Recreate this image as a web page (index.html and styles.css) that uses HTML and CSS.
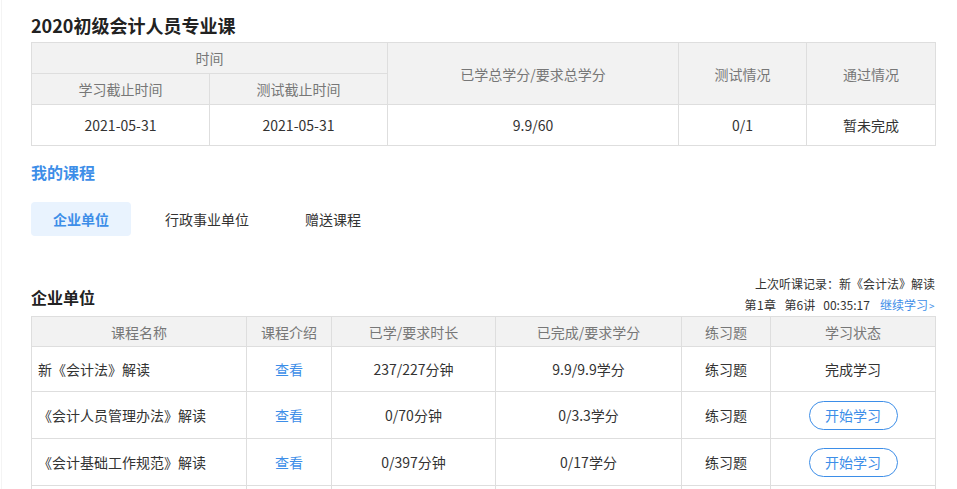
FILE: index.html
```html
<!DOCTYPE html>
<html lang="zh-CN">
<head>
<meta charset="utf-8">
<title>2020初级会计人员专业课</title>
<link rel="stylesheet" href="styles.css">
</head>
<body>
<div class="page">
  <h1 class="title">2020初级会计人员专业课</h1>
  <table class="grid summary">
    <colgroup>
      <col style="width:178px"><col style="width:178px"><col style="width:291px"><col style="width:128px"><col style="width:129px">
    </colgroup>
    <thead>
      <tr class="hrow">
        <th colspan="2">时间</th>
        <th rowspan="2">已学总学分/要求总学分</th>
        <th rowspan="2">测试情况</th>
        <th rowspan="2">通过情况</th>
      </tr>
      <tr class="hrow">
        <th>学习截止时间</th>
        <th>测试截止时间</th>
      </tr>
    </thead>
    <tbody>
      <tr class="drow">
        <td>2021-05-31</td>
        <td>2021-05-31</td>
        <td>9.9/60</td>
        <td>0/1</td>
        <td>暂未完成</td>
      </tr>
    </tbody>
  </table>

  <h2 class="section">我的课程</h2>
  <div class="tabs">
    <span class="tab active">企业单位</span>
    <span class="tab">行政事业单位</span>
    <span class="tab">赠送课程</span>
  </div>

  <div class="listhead">
    <h3 class="subtitle">企业单位</h3>
    <div class="record">
      <div>上次听课记录：新《会计法》解读</div>
      <div class="last"><span>第1章</span><span>第6讲</span><span>00:35:17</span><a class="link">继续学习<span class="gt">&gt;</span></a></div>
    </div>
  </div>

  <table class="grid courses">
    <colgroup>
      <col style="width:215px"><col style="width:85px"><col style="width:164px"><col style="width:186px"><col style="width:89px"><col style="width:165px">
    </colgroup>
    <thead>
      <tr class="hrow">
        <th>课程名称</th>
        <th>课程介绍</th>
        <th>已学/要求时长</th>
        <th>已完成/要求学分</th>
        <th>练习题</th>
        <th>学习状态</th>
      </tr>
    </thead>
    <tbody>
      <tr class="crow first">
        <td class="name">新《会计法》解读</td>
        <td><a class="link">查看</a></td>
        <td>237/227分钟</td>
        <td>9.9/9.9学分</td>
        <td>练习题</td>
        <td>完成学习</td>
      </tr>
      <tr class="crow">
        <td class="name">《会计人员管理办法》解读</td>
        <td><a class="link">查看</a></td>
        <td>0/70分钟</td>
        <td>0/3.3学分</td>
        <td>练习题</td>
        <td><span class="btn">开始学习</span></td>
      </tr>
      <tr class="crow">
        <td class="name">《会计基础工作规范》解读</td>
        <td><a class="link">查看</a></td>
        <td>0/397分钟</td>
        <td>0/17学分</td>
        <td>练习题</td>
        <td><span class="btn">开始学习</span></td>
      </tr>
      <tr class="crow">
        <td class="name"></td>
        <td></td>
        <td></td>
        <td></td>
        <td></td>
        <td></td>
      </tr>
    </tbody>
  </table>
</div>
</body>
</html>
```

FILE: styles.css
```css
html, body {
  margin: 0;
  padding: 0;
  background: #fff;
}
body {
  font-family: "Noto Sans CJK SC", "Noto Sans", "Liberation Sans", sans-serif;
  font-size: 14px;
  color: #333;
}
.page {
  padding: 13px 22px 0 29px;
  border-left: 1px solid #f4f4f4;
  margin-left: 1px;
  min-height: 489px;
  box-sizing: border-box;
}
.title {
  margin: 0;
  font-size: 18px;
  line-height: 24px;
  font-weight: bold;
  color: #222;
}
.grid {
  border-collapse: collapse;
  table-layout: fixed;
  width: 904px;
}
.grid th, .grid td {
  border: 1px solid #dedede;
  text-align: center;
  padding: 0;
  font-size: 14px;
  line-height: 20px;
}
.grid th {
  background: #f2f2f2;
  color: #777;
  font-weight: normal;
}
.summary {
  margin-top: 5px;
}
.summary .hrow th {
  height: 30px;
}
.summary .drow td {
  height: 40px;
  color: #333;
}
.section {
  margin: 14px 0 0;
  font-size: 16px;
  line-height: 24px;
  font-weight: bold;
  color: #3d8ee8;
}
.tabs {
  display: flex;
  margin-top: 18px;
  height: 34px;
  align-items: center;
}
.tab {
  display: flex;
  align-items: center;
  justify-content: center;
  height: 34px;
  color: #333;
}
.tab:nth-child(2) { margin-left: 34px; }
.tab:nth-child(3) { margin-left: 56px; }
.tab.active {
  width: 100px;
  background: #e9f3fe;
  border-radius: 4px;
  color: #3d8ee8;
  font-weight: bold;
}
.listhead {
  display: flex;
  justify-content: space-between;
  align-items: flex-end;
  margin-top: 37px;
}
.subtitle {
  margin: 0 0 7px;
  font-size: 16px;
  line-height: 24px;
  font-weight: bold;
  color: #222;
}
.record {
  text-align: right;
  font-size: 12px;
  line-height: 21px;
  color: #333;
}
.last {
  display: flex;
  justify-content: flex-end;
  gap: 8px;
}
.last span:first-child {
  letter-spacing: 0.5px;
}
.link {
  color: #3d8ee8;
  text-decoration: none;
  cursor: pointer;
}
.last .link {
  margin-left: 2px;
}
.gt {
  font-size: 10px;
  margin-left: 1px;
}
.courses .hrow th {
  height: 29px;
}
.courses .crow td {
  height: 46px;
}
.courses .crow.first td {
  height: 44px;
}
.courses td.name {
  text-align: left;
  padding-left: 6px;
}
.btn {
  display: inline-flex;
  align-items: center;
  justify-content: center;
  width: 87px;
  height: 27px;
  border: 1px solid #3d8ee8;
  border-radius: 15px;
  color: #3d8ee8;
  font-size: 14px;
  line-height: 20px;
}
```
